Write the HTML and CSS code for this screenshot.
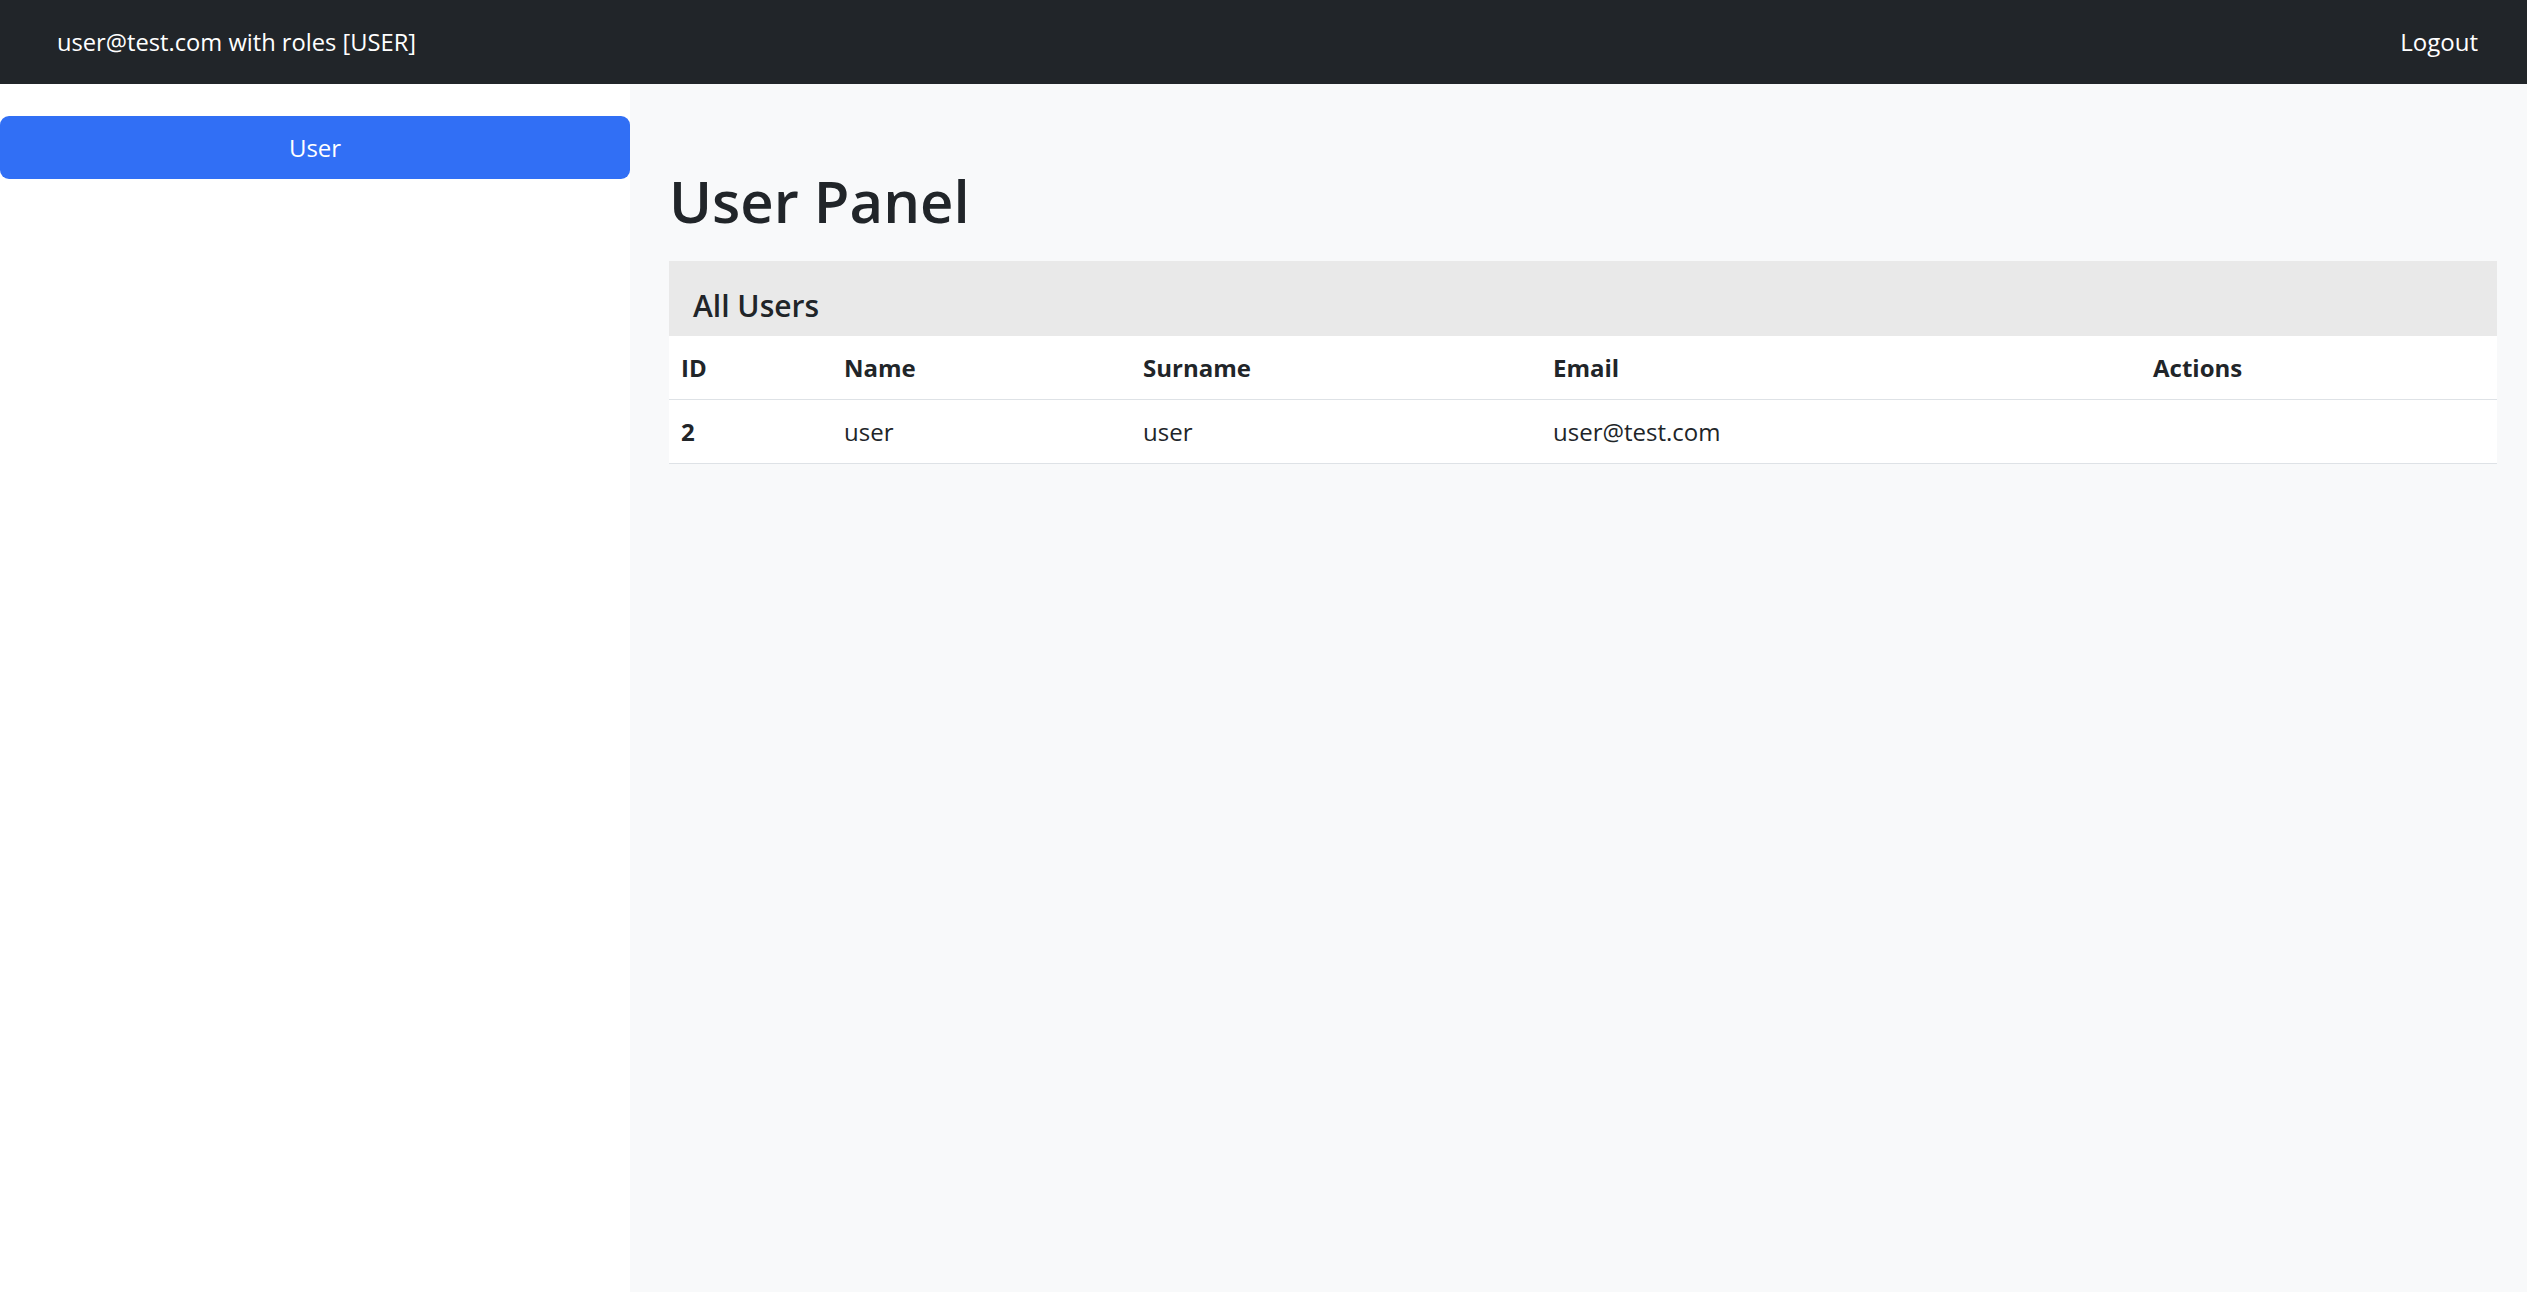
FILE: index.html
```html
<!DOCTYPE html>
<html lang="en">
<head>
<meta charset="utf-8">
<title>User Panel</title>
<link rel="stylesheet" href="styles.css">
</head>
<body>
<nav class="topbar">
  <span class="topbar-user">user@test.com with roles [USER]</span>
  <a class="topbar-link" href="#">Logout</a>
</nav>
<div class="layout">
  <aside class="sidebar">
    <a class="side-link active" href="#">User</a>
  </aside>
  <main class="content">
    <h1 class="page-title">User Panel</h1>
    <section class="card">
      <div class="card-header"><h5 class="card-title">All Users</h5></div>
      <table class="users">
        <colgroup>
          <col class="c-id"><col class="c-name"><col class="c-surname"><col class="c-email"><col class="c-actions">
        </colgroup>
        <thead>
          <tr><th>ID</th><th>Name</th><th>Surname</th><th>Email</th><th>Actions</th></tr>
        </thead>
        <tbody>
          <tr><th>2</th><td>user</td><td>user</td><td>user@test.com</td><td></td></tr>
        </tbody>
      </table>
    </section>
  </main>
</div>
</body>
</html>
```
FILE: styles.css
```css
* { box-sizing: border-box; }
html, body { margin: 0; padding: 0; }
body {
  font-family: "Open Sans", "Noto Sans", "Liberation Sans", sans-serif;
  font-size: 24px;
  line-height: 36px;
  color: #212529;
  background: #f8f9fa;
}
.topbar {
  display: flex;
  justify-content: space-between;
  align-items: center;
  height: 84px;
  padding: 0 49px 0 57px;
  background: #212529;
  color: #ffffff;
}
.topbar-user { color: #ffffff; font-size: 23.7px; }
.topbar-link { color: #ffffff; text-decoration: none; }
.layout {
  display: flex;
  min-height: calc(100vh - 84px);
}
.sidebar {
  flex: 0 0 630px;
  background: #ffffff;
  padding-top: 32px;
}
.side-link {
  display: block;
  text-align: center;
  padding: 13.5px 18px;
  border-radius: 9px;
  background: #316ff5;
  color: #ffffff;
  text-decoration: none;
}
.content {
  flex: 1 1 auto;
  padding: 81px 30px 0 39px;
  background: #f8f9fa;
}
.page-title {
  margin: 0 0 24px;
  font-size: 58px;
  line-height: 72px;
  font-weight: 600;
  color: #212529;
}
.card {
  background: #ffffff;
}
.card-header {
  background: #e9e9e9;
  padding: 27px 24px 12px;
}
.card-title {
  margin: 0;
  font-size: 30px;
  line-height: 36px;
  font-weight: 600;
}
.users {
  width: 100%;
  border-collapse: collapse;
  table-layout: fixed;
}
.c-id { width: 163px; }
.c-name { width: 299px; }
.c-surname { width: 410px; }
.c-email { width: 600px; }
.c-actions { width: 356px; }
.users th, .users td {
  text-align: left;
  padding: 14px 12px 13px;
  border-bottom: 1px solid #dee2e6;
  vertical-align: top;
}
.users th { font-weight: 700; }
.users td { font-weight: 400; }
```
